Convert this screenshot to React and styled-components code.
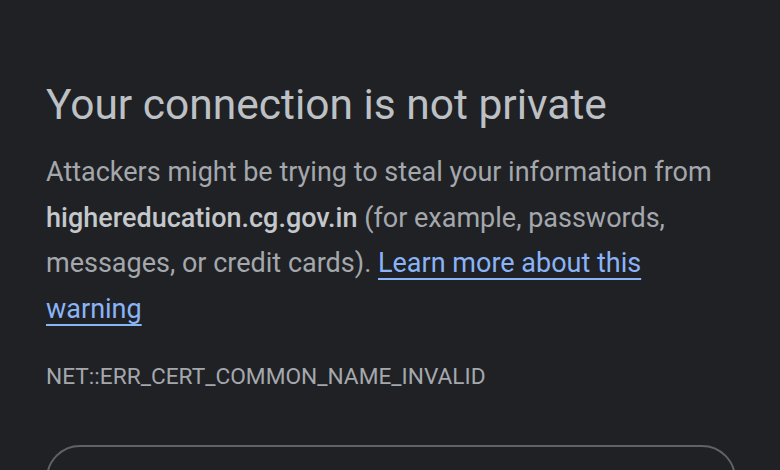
import React from "react";
import styled, { createGlobalStyle } from "styled-components";

const Global = createGlobalStyle`
  html, body {
    margin: 0;
    padding: 0;
    background: #202124;
  }
  body {
    font-family: Roboto, "Noto Sans", sans-serif;
  }
`;

const Page = styled.div`
  width: 780px;
  height: 470px;
  overflow: hidden;
  background: #202124;
  box-sizing: border-box;
  padding: 80px 44px 0 46px;
`;

const Title = styled.h1`
  margin: 0;
  font-size: 42.5px;
  font-weight: 400;
  line-height: 50px;
  color: #bdc1c6;
`;

const Desc = styled.p`
  margin: 20px 0 0;
  font-size: 27px;
  line-height: 45.7px;
  color: #a4a8ad;
`;

const Host = styled.strong`
  font-weight: 500;
  color: #c4c7cb;
`;

const Link = styled.a`
  color: #8ab4f8;
  text-decoration: underline;
  text-decoration-thickness: 2px;
  text-underline-offset: 6px;
`;

const Code = styled.div`
  margin-top: 29px;
  font-size: 22.7px;
  line-height: 30px;
  color: #a4a8ad;
`;

const Details = styled.div`
  margin-top: 53px;
  width: 690px;
  height: 80px;
  border: 2px solid #5f6368;
  border-radius: 34px;
  box-sizing: border-box;
`;

export default function App() {
  return (
    <>
      <Global />
      <Page>
        <Title>Your connection is not private</Title>
        <Desc>
          Attackers might be trying to steal your information from{" "}
          <Host>highereducation.cg.gov.in</Host> (for example, passwords,
          messages, or credit cards). <Link href="#">Learn more about this warning</Link>
        </Desc>
        <Code>NET::ERR_CERT_COMMON_NAME_INVALID</Code>
        <Details />
      </Page>
    </>
  );
}
